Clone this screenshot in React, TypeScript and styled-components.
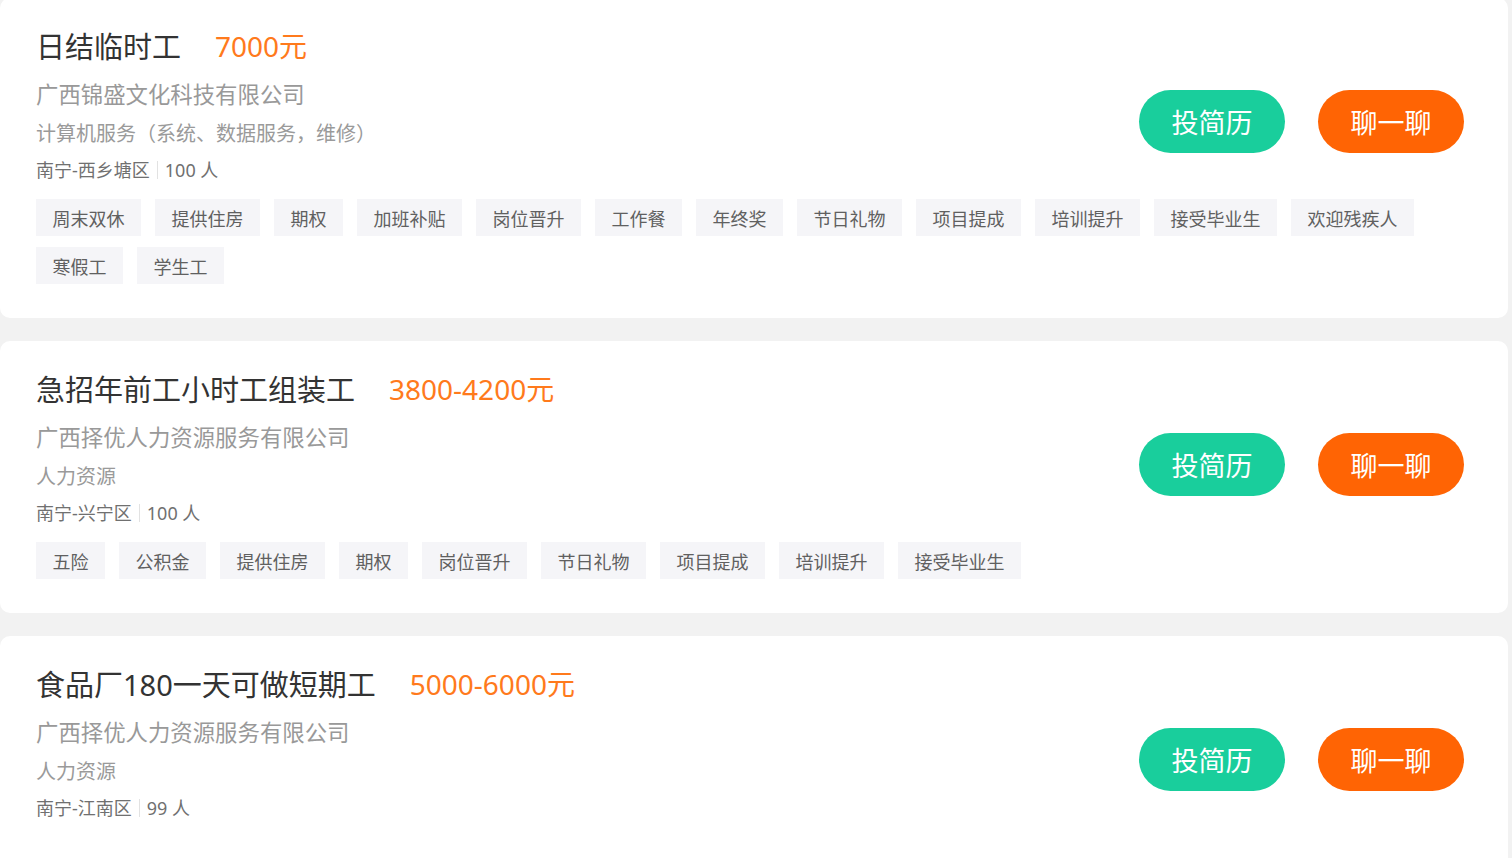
import styled, { createGlobalStyle } from "styled-components"

type Job = {
	title: string,
	salary: string,
	company: string,
	industry: string,
	area: string,
	size: string,
	tags: string[]
}

const jobs: Job[] = [
	{
		title: '日结临时工',
		salary: '7000元',
		company: '广西锦盛文化科技有限公司',
		industry: '计算机服务（系统、数据服务，维修）',
		area: '南宁-西乡塘区',
		size: '100 人',
		tags: ['周末双休', '提供住房', '期权', '加班补贴', '岗位晋升', '工作餐', '年终奖', '节日礼物', '项目提成', '培训提升', '接受毕业生', '欢迎残疾人', '寒假工', '学生工']
	},
	{
		title: '急招年前工小时工组装工',
		salary: '3800-4200元',
		company: '广西择优人力资源服务有限公司',
		industry: '人力资源',
		area: '南宁-兴宁区',
		size: '100 人',
		tags: ['五险', '公积金', '提供住房', '期权', '岗位晋升', '节日礼物', '项目提成', '培训提升', '接受毕业生']
	},
	{
		title: '食品厂180一天可做短期工',
		salary: '5000-6000元',
		company: '广西择优人力资源服务有限公司',
		industry: '人力资源',
		area: '南宁-江南区',
		size: '99 人',
		tags: []
	}
]

function App() {
	return (
		<>
			<GlobalStyle />
			<List>
				{jobs.map(job => (
					<Card key={job.title}>
						<Top>
							<Info>
								<TitleRow>
									<Title>{job.title}</Title>
									<Salary>{job.salary}</Salary>
								</TitleRow>
								<Company>{job.company}</Company>
								<Industry>{job.industry}</Industry>
								<Meta>
									<span>{job.area}</span>
									<Divider />
									<span>{job.size}</span>
								</Meta>
							</Info>
							<Actions>
								<ActionButton $color="#19ce9c">投简历</ActionButton>
								<ActionButton $color="#ff6404">聊一聊</ActionButton>
							</Actions>
						</Top>
						{job.tags.length > 0 && (
							<Tags>
								{job.tags.map(tag => <Tag key={tag}>{tag}</Tag>)}
							</Tags>
						)}
					</Card>
				))}
			</List>
		</>
	)
}

const GlobalStyle = createGlobalStyle`
	html, body {
		margin: 0;
		padding: 0;
		background: #f2f2f2;
		font-family: "Noto Sans", "Noto Sans CJK SC", sans-serif;
		overflow: hidden;
	}
`

const List = styled.div`
	display: flex;
	flex-direction: column;
	gap: 23px;
	margin-top: -2px;
	padding-right: 4px;
`

const Card = styled.div`
	display: flex;
	flex-direction: column;
	min-height: 272px;
	box-sizing: border-box;
	background: #ffffff;
	border-radius: 10px;
	padding: 22px 44px 34px 36px;
`

const Top = styled.div`
	display: flex;
	justify-content: space-between;
	align-items: flex-start;
`

const Info = styled.div`
	display: flex;
	flex-direction: column;
`

const TitleRow = styled.div`
	display: flex;
	align-items: center;
	gap: 34px;
	height: 50px;
`

const Title = styled.span`
	font-size: 29px;
	color: #333333;
`

const Salary = styled.span`
	font-size: 28px;
	color: #ff7a1c;
`

const Company = styled.div`
	margin-top: 10px;
	font-size: 22.4px;
	line-height: 30px;
	color: #999999;
`

const Industry = styled.div`
	margin-top: 9px;
	font-size: 20px;
	line-height: 30px;
	color: #9a9a9a;
`

const Meta = styled.div`
	display: flex;
	align-items: center;
	margin-top: 7px;
	font-size: 18px;
	line-height: 28px;
	color: #707070;
`

const Divider = styled.i`
	display: inline-block;
	width: 1px;
	height: 18px;
	margin: 0 7px;
	background: #e2e2e2;
`

const Actions = styled.div`
	display: flex;
	gap: 33px;
	margin-top: 70px;
`

const ActionButton = styled.button<{ $color: string }>`
	width: 146px;
	height: 63px;
	border: none;
	border-radius: 32px;
	background: ${p => p.$color};
	color: #ffffff;
	font-family: "Noto Sans CJK SC", sans-serif;
	font-size: 27px;
	cursor: pointer;
`

const Tags = styled.div`
	display: flex;
	flex-wrap: wrap;
	gap: 11px 14px;
	margin-top: 15px;
`

const Tag = styled.span`
	display: flex;
	align-items: center;
	height: 37px;
	padding: 0 16.5px;
	background: #f5f5f8;
	font-size: 18px;
	color: #606060;
`

export default App
